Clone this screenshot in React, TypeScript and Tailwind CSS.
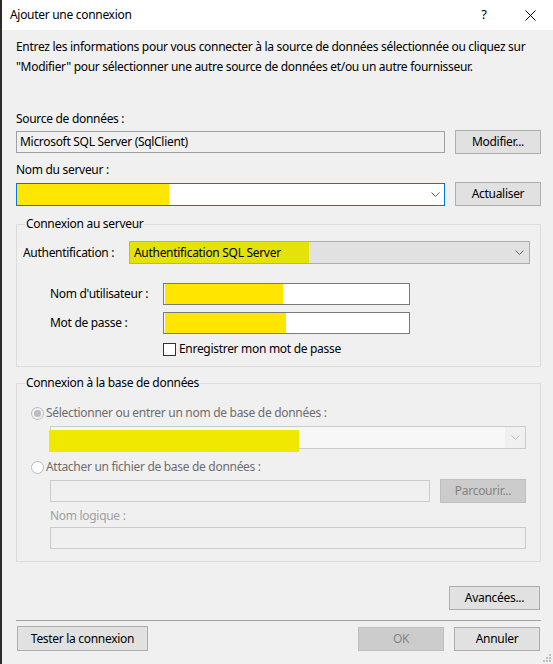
import React from "react";

const Chevron = ({ color = "#606060" }: { color?: string }) => (
  <svg width="9" height="5" viewBox="0 0 9 5" className="block">
    <polyline points="0.5,0.5 4.5,4.5 8.5,0.5" fill="none" stroke={color} strokeWidth="1" />
  </svg>
);

const Btn = ({ children, w, disabled = false }: { children: React.ReactNode; w: string; disabled?: boolean }) => (
  <div
    className={
      "h-[24px] flex items-center justify-center border shrink-0 " +
      w +
      (disabled ? " bg-[#cccccc] border-[#bfbfbf] text-[#838383]" : " bg-[#e1e1e1] border-[#adadad] text-black")
    }
  >
    {children}
  </div>
);

export default function App() {
  return (
    <div
      className="w-[553px] h-[664px] flex flex-col border-l-2 border-[#2b2b2b] bg-[#f0f0f0] text-[12px] tracking-[-0.3px] text-black overflow-hidden"
      style={{ fontFamily: '"Noto Sans", "Open Sans", sans-serif' }}
    >
      {/* Title bar */}
      <div className="h-[30px] bg-white flex items-center pl-[8px] shrink-0">
        <span className="flex-1">Ajouter une connexion</span>
        <span className="w-[10px] text-center mr-[36px] text-[13px]">?</span>
        <svg width="11" height="11" viewBox="0 0 11 11" className="mr-[17px]">
          <path d="M0.5 0.5 L10.5 10.5 M10.5 0.5 L0.5 10.5" stroke="#000" strokeWidth="1" />
        </svg>
      </div>

      <div className="flex-1 flex flex-col pl-[14px] pr-[12px] relative">
        {/* Intro */}
        <div className="mt-[7px] leading-[20px] whitespace-nowrap">
          <div>Entrez les informations pour vous connecter à la source de données sélectionnée ou cliquez sur</div>
          <div>"Modifier" pour sélectionner une autre source de données et/ou un autre fournisseur.</div>
        </div>

        <div className="mt-[34px] leading-[16px]">Source de données :</div>
        <div className="mt-[3px] h-[24px] flex items-center">
          <div className="w-[429px] h-[22px] border border-[#a0a0a0] bg-[#f0f0f0] flex items-center pl-[3px]">
            Microsoft SQL Server (SqlClient)
          </div>
          <div className="ml-[10px]">
            <Btn w="w-[86px]">Modifier...</Btn>
          </div>
        </div>

        <div className="mt-[8px] leading-[16px]">Nom du serveur :</div>
        <div className="mt-[4px] h-[24px] flex items-center">
          <div className="w-[429px] h-[23px] border border-[#0078d7] bg-white flex items-center">
            <div className="w-[152px] h-[21px] bg-[#ffe600] mt-[1px]" />
            <div className="flex-1" />
            <div className="mr-[4px]"><Chevron /></div>
          </div>
          <div className="ml-[10px]">
            <Btn w="w-[86px]">Actualiser</Btn>
          </div>
        </div>

        {/* Group 1 */}
        <div className="mt-[18px] relative border border-[#dcdcdc] pt-[16px] pb-[9px] pl-[6px] pr-[10px]">
          <span className="absolute -top-[9px] left-[8px] bg-[#f0f0f0] px-[1px] leading-[16px]">Connexion au serveur</span>
          <div className="flex items-center h-[23px]">
            <span className="w-[106px]">Authentification :</span>
            <div className="flex-1 h-[23px] border border-[#adadad] bg-[#e1e1e1] flex items-center">
              <div className="w-[179px] h-full bg-[#e5e20a] flex items-center pl-[4px]">Authentification SQL Server</div>
              <div className="flex-1" />
              <div className="mr-[5px]"><Chevron /></div>
            </div>
          </div>
          <div className="mt-[19px] flex items-center h-[22px]">
            <span className="w-[140px] pl-[27px]">Nom d'utilisateur :</span>
            <div className="w-[247px] h-[22px] border border-[#7a7a7a] bg-white flex items-center">
              <div className="w-[118px] h-[20px] bg-[#ffe600] ml-[1px]" />
            </div>
          </div>
          <div className="mt-[7px] flex items-center h-[22px]">
            <span className="w-[140px] pl-[27px]">Mot de passe :</span>
            <div className="w-[247px] h-[22px] border border-[#7a7a7a] bg-white flex items-center">
              <div className="w-[121px] h-[20px] bg-[#ffe600] ml-[1px]" />
            </div>
          </div>
          <div className="mt-[7px] flex items-center h-[16px] pl-[140px]">
            <div className="w-[13px] h-[13px] border border-[#333333] bg-white" />
            <span className="ml-[3px]">Enregistrer mon mot de passe</span>
          </div>
        </div>

        {/* Group 2 */}
        <div className="mt-[16px] relative border border-[#dcdcdc] pt-[21px] pb-[12px] pl-[14px] pr-[14px]">
          <span className="absolute -top-[9px] left-[8px] bg-[#f0f0f0] px-[1px] leading-[16px]">Connexion à la base de données</span>
          <div className="flex items-center h-[16px] text-[#6d6d6d]">
            <div className="w-[13px] h-[13px] rounded-full border border-[#bcbcbc] bg-[#f0f0f0] flex items-center justify-center">
              <div className="w-[7px] h-[7px] rounded-full bg-[#bcbcbc]" />
            </div>
            <span className="ml-[2px]">Sélectionner ou entrer un nom de base de données :</span>
          </div>
          <div className="mt-[5px] ml-[19px] h-[23px] border border-[#cccccc] bg-[#f7f7f7] flex items-start relative">
            <div className="absolute left-[-2px] top-[3px] w-[250px] h-[22px] bg-[#f0e800]" />
            <div className="flex-1" />
            <div className="w-[20px] h-full bg-[#f0f0f0] flex items-center justify-center"><Chevron color="#c0c0c0" /></div>
          </div>
          <div className="mt-[10px] flex items-center h-[16px] text-[#6d6d6d]">
            <div className="w-[13px] h-[13px] rounded-full border border-[#bcbcbc] bg-white" />
            <span className="ml-[2px]">Attacher un fichier de base de données :</span>
          </div>
          <div className="mt-[4px] ml-[19px] flex items-center h-[24px]">
            <div className="w-[380px] h-[22px] border border-[#cccccc] bg-[#f0f0f0]" />
            <div className="ml-[10px]">
              <Btn w="w-[86px]" disabled>Parcourir...</Btn>
            </div>
          </div>
          <div className="mt-[5px] ml-[19px] leading-[16px] text-[#a0a0a0]">Nom logique :</div>
          <div className="mt-[3px] ml-[19px] h-[22px] border border-[#cccccc] bg-[#f0f0f0]" />
        </div>

        <div className="mt-[24px] flex justify-end pr-[1px]">
          <Btn w="w-[91px]">Avancées...</Btn>
        </div>
        <div className="mt-[10px] h-px bg-[#a0a0a0]" />
        <div className="mt-[5px] flex items-center pr-[1px]">
          <div className="ml-[1px]">
            <Btn w="w-[131px] h-[25px]">Tester la connexion</Btn>
          </div>
          <div className="flex-1" />
          <Btn w="w-[86px]" disabled>OK</Btn>
          <div className="ml-[10px]">
            <Btn w="w-[86px]">Annuler</Btn>
          </div>
        </div>
        <svg width="10" height="10" viewBox="0 0 10 10" className="absolute right-[1px] bottom-[1px]">
          <rect x="7" y="1" width="2" height="2" fill="#bfbfbf" />
          <rect x="4" y="4" width="2" height="2" fill="#bfbfbf" />
          <rect x="7" y="4" width="2" height="2" fill="#bfbfbf" />
          <rect x="1" y="7" width="2" height="2" fill="#bfbfbf" />
          <rect x="4" y="7" width="2" height="2" fill="#bfbfbf" />
          <rect x="7" y="7" width="2" height="2" fill="#bfbfbf" />
        </svg>
      </div>
    </div>
  );
}
